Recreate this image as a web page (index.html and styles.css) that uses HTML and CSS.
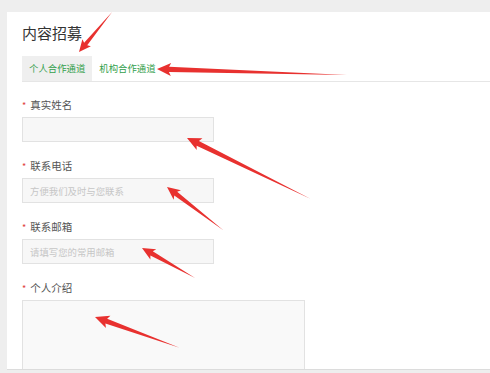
FILE: index.html
```html
<!DOCTYPE html>
<html lang="zh-CN">
<head>
<meta charset="utf-8">
<title>内容招募</title>
<link rel="stylesheet" href="styles.css">
</head>
<body>
<div class="panel">
  <h1 class="title">内容招募</h1>
  <div class="tabs">
    <div class="tab active">个人合作通道</div>
    <div class="tab">机构合作通道</div>
  </div>
  <form class="form">
    <div class="field">
      <label class="label"><span class="req">*</span>真实姓名</label>
      <input class="input" type="text">
    </div>
    <div class="field">
      <label class="label"><span class="req">*</span>联系电话</label>
      <input class="input" type="text" placeholder="方便我们及时与您联系">
    </div>
    <div class="field">
      <label class="label"><span class="req">*</span>联系邮箱</label>
      <input class="input" type="text" placeholder="请填写您的常用邮箱">
    </div>
    <div class="field">
      <label class="label"><span class="req">*</span>个人介绍</label>
      <textarea class="textarea"></textarea>
    </div>
  </form>
</div>
<svg class="arrows" width="490" height="373" viewBox="0 0 490 373">
  <g fill="#e8312f">
    <polygon points="0,0 12,-5.5 10.5,-2 52,0 10.5,2 12,5.5" transform="translate(79 52) rotate(-50.5)"/>
    <polygon points="0,0 14,-6.5 12,-2.6 190,0 12,2.6 14,6.5" transform="translate(157 69) rotate(1.8)"/>
    <polygon points="0,0 14,-6.5 12,-2.6 138,0 12,2.6 14,6.5" transform="translate(187 138) rotate(26.2)"/>
    <polygon points="0,0 13,-6 11,-2.4 71,0 11,2.4 13,6" transform="translate(167 187) rotate(37.5)"/>
    <polygon points="0,0 13,-6 11,-2.4 61,0 11,2.4 13,6" transform="translate(142 248) rotate(29.5)"/>
    <polygon points="0,0 14,-6.5 12,-2.6 90,0 12,2.6 14,6.5" transform="translate(95 317) rotate(20)"/>
  </g>
</svg>
</body>
</html>
```
FILE: styles.css
```css
html, body {
  margin: 0;
  padding: 0;
}
body {
  background: #eeeeee;
  font-family: "Noto Sans CJK SC", "Noto Sans", sans-serif;
  width: 490px;
  height: 373px;
  overflow: hidden;
  position: relative;
}
.panel {
  margin: 12px 0 0 7px;
  background: #ffffff;
  height: 357px;
  overflow: hidden;
  border-bottom: 1px solid #dcdcdc;
}
.title {
  margin: 11px 0 0 0;
  padding: 0 15px;
  font-size: 15px;
  line-height: 20px;
  font-weight: normal;
  color: #333333;
}
.tabs {
  display: flex;
  margin: 13px 0 0 15px;
  border-bottom: 1px solid #e6e6e6;
}
.tab {
  height: 25px;
  line-height: 25px;
  padding: 0 7px;
  font-size: 9.4px;
  color: #33a04c;
}
.tab.active {
  background: #efefef;
}
.form {
  padding: 16px 15px 0;
  margin: 0;
}
.field {
  margin-bottom: 17px;
}
.label {
  display: block;
  font-size: 10.5px;
  line-height: 14px;
  color: #555555;
  margin-bottom: 4px;
}
.req {
  color: #e0403a;
  font-size: 9px;
  margin-right: 4px;
}
.input {
  display: block;
  box-sizing: border-box;
  width: 192px;
  height: 25px;
  margin: 0;
  padding: 0 0 0 7px;
  background: #f7f7f7;
  border: 1px solid #e2e2e2;
  border-radius: 0;
  outline: none;
  font-family: "Noto Sans CJK SC", "Noto Sans", sans-serif;
  font-size: 9.4px;
  color: #333333;
}
.input::placeholder {
  color: #c6c6c6;
}
.textarea {
  display: block;
  box-sizing: border-box;
  width: 283px;
  height: 100px;
  margin: 0;
  padding: 0;
  background: #f9f9f9;
  border: 1px solid #e2e2e2;
  border-radius: 0;
  resize: none;
  outline: none;
}
.arrows {
  position: absolute;
  left: 0;
  top: 0;
  pointer-events: none;
}
```
